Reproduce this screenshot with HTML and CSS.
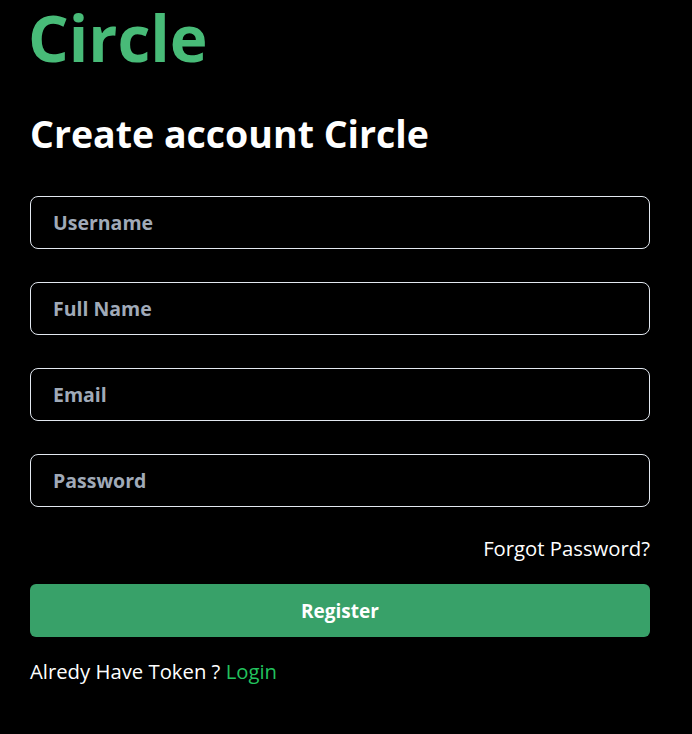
FILE: index.html
```html
<!DOCTYPE html>
<html>
<head>
<meta charset="utf-8">
<link rel="stylesheet" href="styles.css">
</head>
<body>
<div class="page">
  <h1 class="brand">Circle</h1>
  <h2 class="title">Create account Circle</h2>
  <form class="form">
    <div class="fields">
      <input class="field" type="text" placeholder="Username">
      <input class="field" type="text" placeholder="Full Name">
      <input class="field" type="email" placeholder="Email">
      <input class="field" type="password" placeholder="Password">
    </div>
    <div class="forgot">Forgot Password?</div>
    <button class="btn" type="button">Register</button>
    <div class="footer">Alredy Have Token ? <a class="login" href="#">Login</a></div>
  </form>
</div>
</body>
</html>
```
FILE: styles.css
```css
html, body {
  margin: 0;
  padding: 0;
  background: #000;
  color: #fff;
  font-family: "Open Sans", "Noto Sans", sans-serif;
}
.page {
  width: 620px;
  padding: 0 30px;
}
.brand {
  margin: 0 0 0 -2px;
  font-size: 64px;
  line-height: 76px;
  color: #48bb78;
  font-weight: 700;
}
.title {
  margin: 36px 0 0;
  font-size: 37.5px;
  line-height: 44px;
  font-weight: 700;
}
.form {
  display: flex;
  flex-direction: column;
  margin-top: 40px;
}
.fields {
  display: flex;
  flex-direction: column;
  gap: 33px;
}
.field {
  box-sizing: border-box;
  height: 53px;
  width: 100%;
  background: transparent;
  border: 1px solid #e2e8f0;
  border-radius: 8px;
  padding: 0 22px;
  font-family: inherit;
  font-size: 19.5px;
  font-weight: 700;
  color: #fff;
  outline: none;
}
.field::placeholder {
  color: #a0aab8;
  opacity: 1;
}
.forgot {
  text-align: right;
  font-size: 20.3px;
  line-height: 28px;
  margin-top: 27px;
}
.btn {
  height: 53px;
  margin-top: 22px;
  border: none;
  border-radius: 6px;
  background: #38a169;
  color: #fff;
  font-family: inherit;
  font-size: 19px;
  font-weight: 700;
}
.footer {
  font-size: 20.3px;
  line-height: 28px;
  margin-top: 20px;
}
.login {
  color: #22c35e;
  text-decoration: none;
}
```
